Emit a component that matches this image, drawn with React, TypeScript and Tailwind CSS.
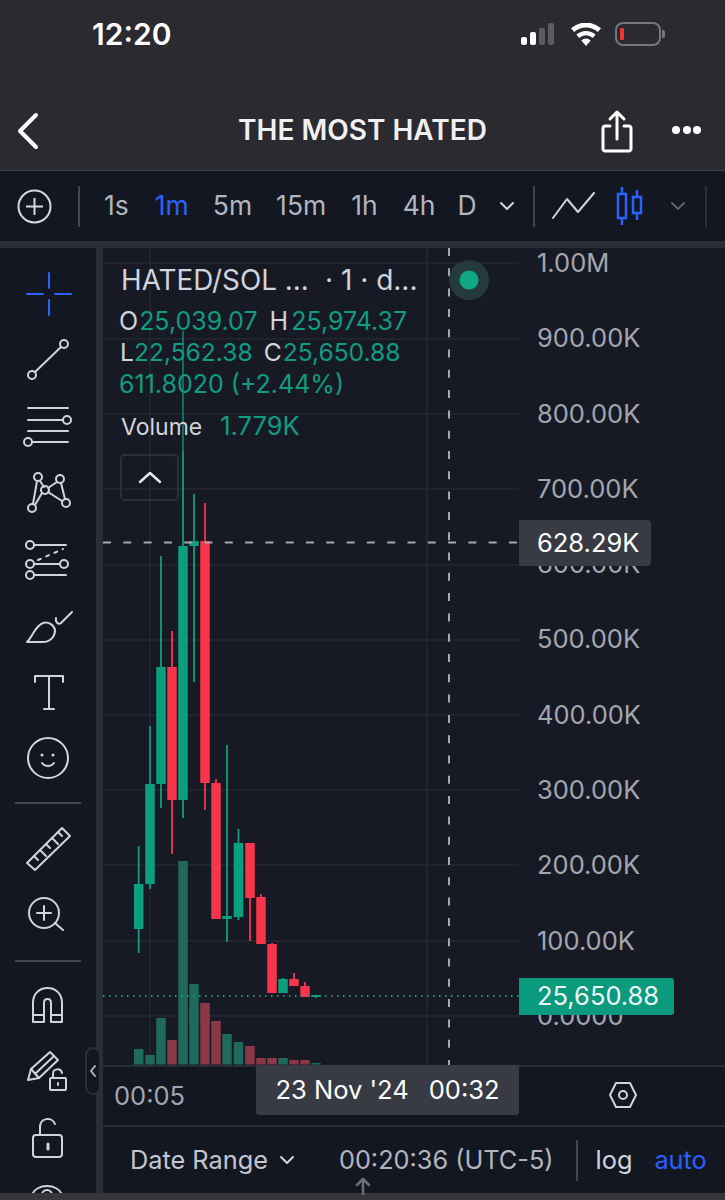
import type { ReactNode } from 'react';

const GREEN = '#0b9f80';
const RED = '#f8354a';

// x, wick top, wick bottom, body top, body bottom, up
const CANDLES: [number, number, number, number, number, boolean][] = [
  [138.7, 845, 952, 883, 928, true],
  [150, 725, 888, 783, 883, true],
  [161, 555, 807, 666, 783, true],
  [172, 630, 853, 666, 799, false],
  [183, 450, 817, 545, 799, true],
  [194, 493, 681, 540, 545, true],
  [205, 502, 809, 540, 782, false],
  [216, 778, 782, 782, 918, false],
  [227, 744, 941, 915, 918, true],
  [238.5, 828, 919, 842, 916, true],
  [250, 842, 940, 842, 897, false],
  [261, 893, 943, 896, 943, false],
  [272, 942, 992, 943, 992, false],
  [283, 977, 992, 978, 992, true],
  [294, 972, 985, 978, 985, false],
  [305, 981, 996, 985, 996, false],
  [316, 994, 997, 994, 996, true],
];

const VOLUMES = [1048, 1054, 1017, 1039, 860, 983, 1002, 1020, 1033, 1041, 1045, 1057, 1057, 1057, 1059, 1059, 1062];
const GRID_Y = [262, 338, 413, 488, 564, 639, 714, 789, 864, 940, 1015];
const PRICES = ['1.00M', '900.00K', '800.00K', '700.00K', '600.00K', '500.00K', '400.00K', '300.00K', '200.00K', '100.00K', '0.0000'];
const INTERVALS = [
  { label: '1s', cls: 'ml-[24px] text-[#b2b5be]' },
  { label: '1m', cls: 'ml-[26px] text-[#2962ff]' },
  { label: '5m', cls: 'ml-[24px] text-[#b2b5be]' },
  { label: '15m', cls: 'ml-[24px] text-[#b2b5be]' },
  { label: '1h', cls: 'ml-[25px] text-[#b2b5be]' },
  { label: '4h', cls: 'ml-[25px] text-[#b2b5be]' },
  { label: 'D', cls: 'ml-[22px] text-[#b2b5be]' },
];

function Tool({ top, h, children }: { top: number; h: number; children: ReactNode }) {
  return (
    <svg
      width={96}
      height={h}
      viewBox={`0 ${top} 96 ${h}`}
      fill="none"
      stroke="#d1d4dc"
      strokeWidth={2}
      strokeLinecap="round"
      strokeLinejoin="round"
      className="block shrink-0"
    >
      {children}
    </svg>
  );
}

function Divider() {
  return <div className="h-[2px] w-[66px] bg-[#434651] ml-[15px]" />;
}

function ToolRail() {
  return (
    <aside className="w-[96px] shrink-0 pt-[13px] bg-[#131722] overflow-hidden">
      <Tool top={260} h={66}>
        <path d="M49 272v15M49 299v15M27 293h16M55 293h16" stroke="#2962ff" />
      </Tool>
      <Tool top={326} h={66}>
        <circle cx={32} cy={374} r={4} />
        <circle cx={64} cy={343} r={4} />
        <path d="M35 371l26-25" />
      </Tool>
      <Tool top={392} h={66}>
        <path d="M28 407h40M28 419h35M28 430h40M32 441h36" />
        <circle cx={67} cy={419} r={4} />
        <circle cx={28} cy={441} r={4} />
      </Tool>
      <Tool top={458} h={66}>
        <path d="M37 480l-4 23M40 480l4 6M57 481l-9 6M61 482l4 16M42 492l-7 12M48 491l14 9" />
        <circle cx={38} cy={476} r={4} />
        <circle cx={60} cy={478} r={4} />
        <circle cx={45} cy={489} r={4} />
        <circle cx={32} cy={507} r={4} />
        <circle cx={66} cy={502} r={4} />
      </Tool>
      <Tool top={524} h={70}>
        <path d="M34 544h32M34 563h26M34 574h32" />
        <path d="M38 559l25-11" strokeDasharray="3 6" />
        <circle cx={30} cy={544} r={4} />
        <circle cx={30} cy={563} r={4} />
        <circle cx={64} cy={563} r={4} />
        <circle cx={30} cy={574} r={4} />
      </Tool>
      <Tool top={594} h={66}>
        <path d="M27 641C33 635 35 625 43 622C48 620 54 624 55 629C55 636 50 641 43 641Z" />
        <path d="M56 617C55 621 58 624 61 622L72 611" />
      </Tool>
      <Tool top={660} h={64}>
        <path d="M35 681v-6h28v6M49 675v33M44 708h10" />
      </Tool>
      <Tool top={724} h={66}>
        <circle cx={48} cy={757} r={20} />
        <circle cx={42} cy={754} r={1.5} fill="#d1d4dc" stroke="none" />
        <circle cx={53} cy={754} r={1.5} fill="#d1d4dc" stroke="none" />
        <path d="M42 762c3 4 9 4 12 0" />
      </Tool>
      <div className="h-[24px] flex items-center">
        <Divider />
      </div>
      <Tool top={814} h={68}>
        <path d="M27 862L62 827L70 835L35 869Z" />
        <path d="M34 855l4 4M40 849l6 6M46 843l4 4M52 837l6 6M58 831l4 4" />
      </Tool>
      <Tool top={882} h={64}>
        <circle cx={44} cy={912} r={15} />
        <path d="M44 905v14M37 912h14M55 922l8 7" />
      </Tool>
      <div className="h-[28px] flex items-center">
        <Divider />
      </div>
      <Tool top={974} h={66}>
        <path d="M33 1021V1002C33 993 39 987 47.5 987C56 987 62 993 62 1002V1021H51V1002C51 999 49.5 998 47.5 998C45.5 998 44 999 44 1002V1021Z" />
        <path d="M33 1014H44M51 1014H62" />
      </Tool>
      <Tool top={1040} h={72}>
        <path d="M28 1079L31 1068L50 1051L58 1059L39 1077Z" />
        <path d="M36 1072L54 1055M31 1068L39 1077" />
        <rect x={50} y={1077} width={16} height={12} rx={1} />
        <path d="M53 1077v-4c0-6 8-6 9-1" />
        <path d="M58 1082v2" />
      </Tool>
      <Tool top={1112} h={66}>
        <rect x={33} y={1134} width={29} height={22} rx={3} />
        <path d="M40 1134v-8c0-9 12-11 15-3" />
        <path d="M48 1143v5" strokeWidth={3} />
      </Tool>
      <Tool top={1178} h={14}>
        <path d="M32 1194c4-12 26-12 30 0" />
        <circle cx={47} cy={1194} r={5} />
      </Tool>
    </aside>
  );
}

function ChartSvg() {
  return (
    <svg width={416} height={817} viewBox="103 247 416 817" className="absolute inset-0">
      {GRID_Y.map((y) => (
        <line key={y} x1={103} x2={519} y1={y} y2={y} stroke="#262933" strokeWidth={1.5} />
      ))}
      <line x1={150} x2={150} y1={247} y2={1064} stroke="#262933" strokeWidth={1.5} />
      <line x1={427} x2={427} y1={247} y2={1064} stroke="#262933" strokeWidth={1.5} />

      {VOLUMES.map((top, i) => {
        const c = CANDLES[i];
        return (
          <rect key={i} x={c[0] - 4.75} y={top} width={9.5} height={1063.5 - top} fill={c[5] ? '#20695d' : '#8a3848'} />
        );
      })}

      <line x1={183} x2={183} y1={330} y2={450} stroke={GREEN} strokeWidth={1.7} opacity={0.75} />
      {CANDLES.map(([x, wt, wb, bt, bb, up], i) => (
        <g key={i} fill={up ? GREEN : RED}>
          <rect x={x - 0.9} y={wt} width={1.8} height={wb - wt} />
          <rect x={x - 4.75} y={bt} width={9.5} height={bb - bt} />
        </g>
      ))}

      <line x1={103} x2={519} y1={995} y2={995} stroke={GREEN} strokeWidth={2} strokeDasharray="1.5 4.5" />
      <line x1={103} x2={519} y1={541.5} y2={541.5} stroke="#a6a8b0" strokeWidth={2} strokeDasharray="8 12.3" />
      <line x1={449} x2={449} y1={247} y2={1064} stroke="#a6a8b0" strokeWidth={2} strokeDasharray="8 12.3" />

      <circle cx={469} cy={279} r={20} fill="#243a3c" />
      <circle cx={469} cy={279} r={9.5} fill="#12a884" />
    </svg>
  );
}

function Legend() {
  return (
    <div className="absolute left-0 top-0 text-[25px] leading-[32px] text-[#d1d4dc]">
      <div className="absolute left-[18px] top-[16px] text-[27.8px] leading-[32px] whitespace-nowrap">
        HATED/SOL ...
      </div>
      <div className="absolute left-[222px] top-[16px] text-[28px] leading-[32px] whitespace-nowrap">
        · 1 · d...
      </div>
      <div className="absolute left-[16px] top-[57px] flex whitespace-nowrap">
        <span>O</span>
        <span className="ml-[1px] text-[#0f9c80]">25,039.07</span>
        <span className="ml-[12px]">H</span>
        <span className="ml-[3px] text-[#0f9c80]">25,974.37</span>
      </div>
      <div className="absolute left-[17px] top-[88px] flex whitespace-nowrap text-[24.6px]">
        <span>L</span>
        <span className="text-[#0f9c80]">22,562.38</span>
        <span className="ml-[11px]">C</span>
        <span className="ml-[1px] text-[#0f9c80]">25,650.88</span>
      </div>
      <div className="absolute left-[16px] top-[120px] whitespace-nowrap text-[#0f9c80]">611.8020 (+2.44%)</div>
      <div className="absolute left-[18px] top-[162px] flex items-baseline whitespace-nowrap">
        <span className="text-[23px]">Volume</span>
        <span className="ml-[18px] text-[25.5px] text-[#0f9c80]">1.779K</span>
      </div>
      <button
        type="button"
        className="absolute left-[17px] top-[206px] flex h-[47px] w-[59px] items-center justify-center rounded-[5px] border-2 border-[#2c2f3a]"
      >
        <svg width={24} height={14} viewBox="0 0 24 14" fill="none" stroke="#e4e6ec" strokeWidth={2.5} strokeLinecap="round" strokeLinejoin="round">
          <path d="M2 11l10-9 10 9" />
        </svg>
      </button>
    </div>
  );
}

function PriceAxis() {
  return (
    <div className="relative flex-1 h-full">
      <div className="flex h-[783px] flex-col justify-between pl-[18px] text-[25.5px] text-[#a3a6af]">
        {PRICES.map((p) => (
          <div key={p} className="h-[30px] leading-[30px]">
            {p}
          </div>
        ))}
      </div>
      <div className="absolute left-0 top-[272px] flex h-[46px] w-[132px] items-center rounded-r-[4px] bg-[#383a44] pl-[18px] text-[25.5px] text-white">
        628.29K
      </div>
      <div className="absolute left-0 top-[730px] flex h-[37px] w-[155px] items-center rounded-r-[3px] bg-[#0a9a7d] pl-[18px] text-[25.5px] text-[#eef7f5]">
        25,650.88
      </div>
    </div>
  );
}

function TopBars() {
  return (
    <>
      <div className="relative h-[62px] shrink-0 pl-[92px] pt-[16px] text-[30px] leading-[36px] font-semibold text-white">
        12:20
        <div className="absolute left-[521px] top-[23px] flex h-[22px] items-end gap-[3px]">
          <span className="h-[8px] w-[6px] rounded-[2px] bg-white" />
          <span className="h-[13px] w-[6px] rounded-[2px] bg-white" />
          <span className="h-[17px] w-[6px] rounded-[2px] bg-[#5c5c60]" />
          <span className="h-[22px] w-[6px] rounded-[2px] bg-[#5c5c60]" />
        </div>
        <svg className="absolute left-[570px] top-[23px]" width={32} height={23} viewBox="0 0 32 23" fill="white">
          <path d="M16 23l-4.7-5.6a7 7 0 0 1 9.4 0z" />
          <path d="M9.2 14.9l-2.8-3.3a14.5 14.5 0 0 1 19.2 0l-2.8 3.3a10.2 10.2 0 0 0-13.6 0z" />
          <path d="M4.2 9L1 5.3a22.5 22.5 0 0 1 30 0L27.8 9a17.7 17.7 0 0 0-23.6 0z" />
        </svg>
        <div className="absolute left-[615px] top-[22px] h-[24px] w-[46px] rounded-[8px] border-2 border-[#77777b]">
          <span className="absolute left-[3px] top-[4px] h-[12px] w-[4px] rounded-[1px] bg-[#f0352b]" />
        </div>
        <span className="absolute left-[662px] top-[30px] h-[8px] w-[3px] rounded-r-[2px] bg-[#77777b]" />
      </div>
      <header className="relative flex h-[109px] shrink-0 items-center justify-center pt-[28px] border-b border-[#43444a]">
        <svg className="absolute left-[16px] top-[50px]" width={24} height={38} viewBox="0 0 24 38" fill="none" stroke="white" strokeWidth={4} strokeLinecap="round" strokeLinejoin="round">
          <path d="M20 3L4 19l16 16" />
        </svg>
        <h1 className="text-[28px] font-semibold text-[#f0f0f2] whitespace-nowrap">THE MOST HATED</h1>
        <svg className="absolute left-[600px] top-[47px]" width={34} height={44} viewBox="0 0 34 44" fill="none" stroke="white" strokeWidth={3} strokeLinecap="round" strokeLinejoin="round">
          <path d="M10 17H5c-1 0-2 1-2 2v21c0 1 1 2 2 2h24c1 0 2-1 2-2V19c0-1-1-2-2-2h-5" />
          <path d="M17 30V4M10 10l7-7 7 7" />
        </svg>
        <div className="absolute left-[672px] top-[64px] flex gap-[2.5px]">
          <span className="h-[8px] w-[8px] rounded-full bg-white" />
          <span className="h-[8px] w-[8px] rounded-full bg-white" />
          <span className="h-[8px] w-[8px] rounded-full bg-white" />
        </div>
      </header>
      <div className="relative flex h-[70px] shrink-0 items-center bg-[#131722] text-[26.5px]">
        <svg className="ml-[17px]" width={35} height={35} viewBox="0 0 35 35" fill="none" stroke="#d8dae0" strokeWidth={2}>
          <circle cx={17.5} cy={17.5} r={16} />
          <path d="M17.5 9v17M9 17.5h17" />
        </svg>
        <span className="ml-[26px] h-[41px] w-[2px] bg-[#434651]" />
        {INTERVALS.map((i) => (
          <span key={i.label} className={i.cls}>
            {i.label}
          </span>
        ))}
        <svg className="ml-[22px]" width={16} height={10} viewBox="0 0 16 10" fill="none" stroke="#d1d4dc" strokeWidth={2} strokeLinecap="round" strokeLinejoin="round">
          <path d="M2 2l6 6 6-6" />
        </svg>
        <span className="ml-[18px] h-[41px] w-[2px] bg-[#434651]" />
        <svg className="ml-[16px]" width={44} height={28} viewBox="0 0 44 28" fill="none" stroke="#d1d4dc" strokeWidth={2} strokeLinecap="round" strokeLinejoin="round">
          <path d="M2 26L16 7l11 13L43 1" />
        </svg>
        <svg className="ml-[21px]" width={28} height={38} viewBox="0 0 28 38" fill="none" stroke="#2962ff" strokeWidth={2.5}>
          <rect x={2} y={7} width={8} height={24} />
          <path d="M6 0v7M6 31v7" />
          <rect x={17} y={10} width={8} height={16} />
          <path d="M21 3v7M21 26v7" />
        </svg>
        <svg className="ml-[26px]" width={16} height={10} viewBox="0 0 16 10" fill="none" stroke="#5d606b" strokeWidth={2} strokeLinecap="round" strokeLinejoin="round">
          <path d="M2 2l6 6 6-6" />
        </svg>
        <span className="ml-[19px] h-[41px] w-[2px] bg-[#2a2e39]" />
      </div>
      <div className="h-[7px] shrink-0 bg-[#2a2e39]" />
    </>
  );
}

export default function App() {
  return (
    <div className="relative flex h-[1200px] w-[725px] flex-col overflow-hidden bg-[#2a2a30] [font-family:Inter,sans-serif]">
      <TopBars />
      <main className="relative flex h-[945px] shrink-0 bg-[#2a2e39]">
        <ToolRail />
        <div className="ml-[7px] flex flex-1 flex-col bg-[#131722]">
          <div className="flex h-[817px] shrink-0 overflow-hidden bg-[#171a25]">
            <div className="relative h-full w-[416px] shrink-0">
              <ChartSvg />
              <Legend />
            </div>
            <PriceAxis />
          </div>
          <div className="relative flex h-[60px] shrink-0 items-center border-t-2 border-[#2a2e39] pl-[11px] text-[25.5px] text-[#a3a6af]">
            00:05
            <div className="absolute left-[153px] top-[-2px] flex h-[50px] w-[263px] items-center justify-center gap-[20px] rounded-b-[3px] bg-[#383a44] text-white">
              <span>23 Nov '24</span>
              <span>00:32</span>
            </div>
            <svg className="absolute left-[505px] top-[14px]" width={30} height={28} viewBox="0 0 30 28" fill="none" stroke="#d1d4dc" strokeWidth={2} strokeLinejoin="round">
              <path d="M8 2h14l6 12-6 12H8L2 14z" />
              <circle cx={15} cy={14} r={4} />
            </svg>
          </div>
          <div className="relative flex h-[68px] shrink-0 items-center border-t-2 border-[#2a2e39] text-[25.3px] text-[#c4c7cf]">
            <span className="ml-[27px]">Date Range</span>
            <svg className="ml-[11px]" width={16} height={10} viewBox="0 0 16 10" fill="none" stroke="#d1d4dc" strokeWidth={2} strokeLinecap="round" strokeLinejoin="round">
              <path d="M2 2l6 6 6-6" />
            </svg>
            <span className="ml-[44px] text-[#b2b5be]">00:20:36 (UTC-5)</span>
            <span className="ml-[22px] h-[41px] w-[2px] bg-[#434651]" />
            <span className="ml-[18px] text-[#d1d4dc]">log</span>
            <span className="ml-[22px] text-[#2962ff]">auto</span>
            <svg className="absolute left-[251px] top-[50px]" width={18} height={18} viewBox="0 0 18 18" fill="none" stroke="#6b6e78" strokeWidth={2.5} strokeLinecap="round" strokeLinejoin="round">
              <path d="M9 18V3M3 8l6-6 6 6" />
            </svg>
          </div>
        </div>
        <div className="absolute left-[85px] top-[799px] flex h-[48px] w-[16px] items-center justify-center rounded-[8px] border-2 border-[#2a2e39] bg-[#131722]">
          <svg width={8} height={14} viewBox="0 0 8 14" fill="none" stroke="#b2b5be" strokeWidth={2} strokeLinecap="round" strokeLinejoin="round">
            <path d="M6 2L2 7l4 5" />
          </svg>
        </div>
      </main>
      <div className="h-[8px] shrink-0 bg-[#37373b]" />
    </div>
  );
}
